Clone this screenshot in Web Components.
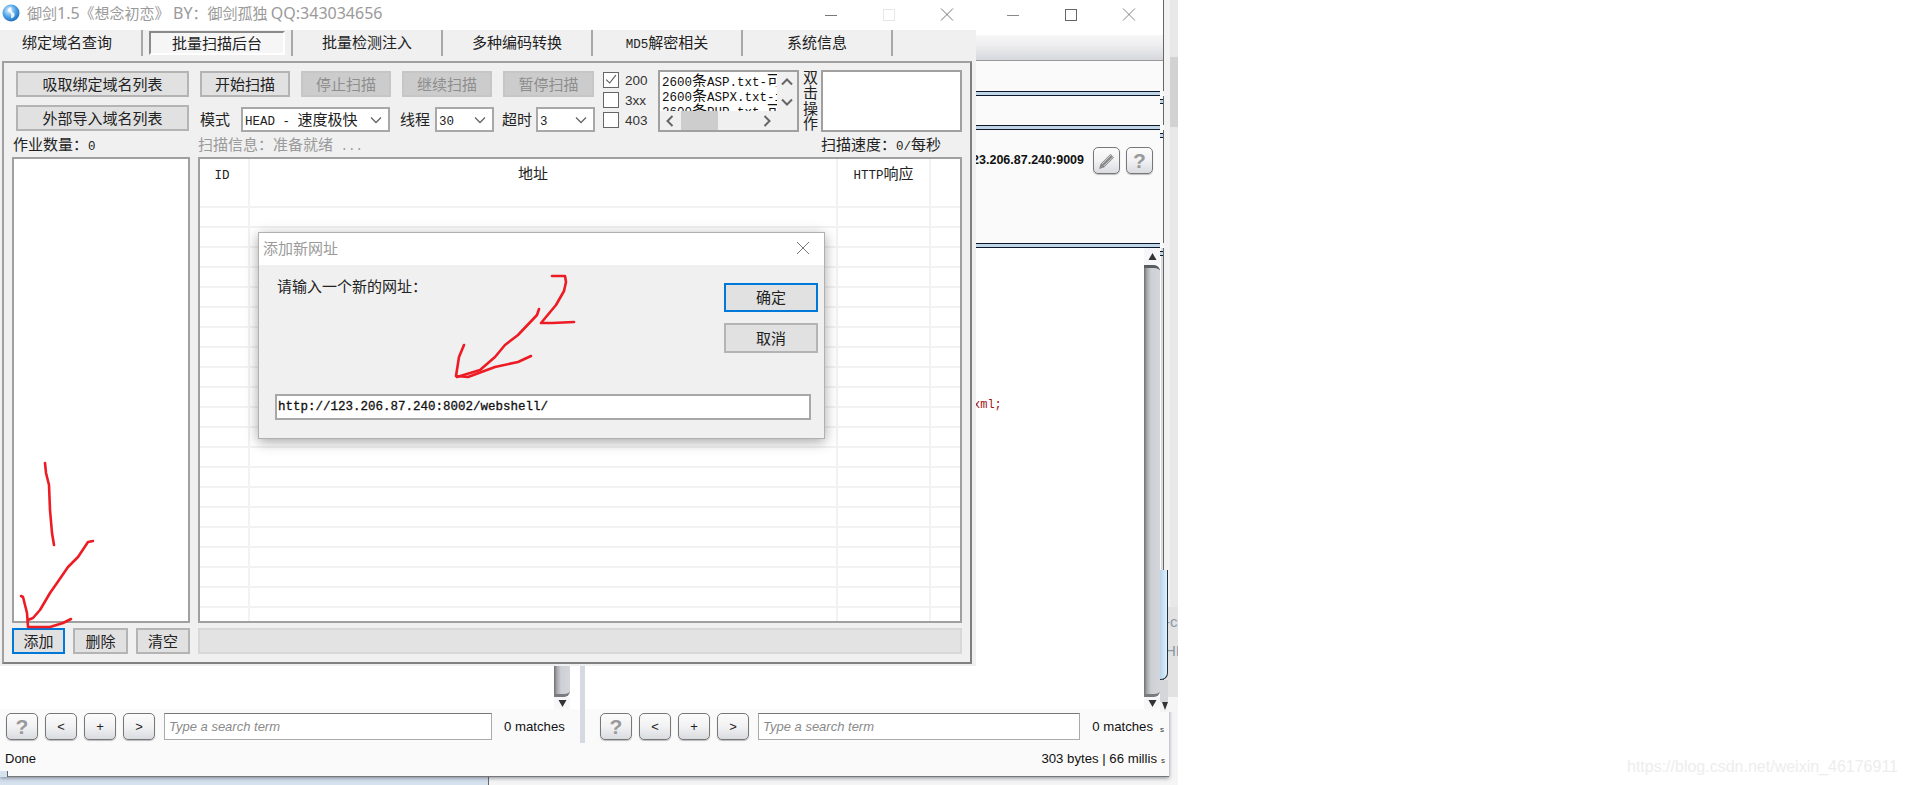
<!DOCTYPE html>
<html lang="zh">
<head>
<meta charset="utf-8">
<title>御剑</title>
<style>
    html, body { margin: 0; height: 785px; background: #fff; overflow: hidden; }
    body { position: relative; font: 15px "Noto Sans CJK SC", "Liberation Sans", sans-serif; color: #222; }
</style>
</head>
<body>
<desk-backdrop></desk-backdrop>
<burp-window></burp-window>
<edge-strip></edge-strip>
<yujian-window></yujian-window>
<add-url-dialog></add-url-dialog>
<ink-marks></ink-marks>
<desk-watermark>https://blog.csdn.net/weixin_46176911</desk-watermark>

<script>
// small helper, every element below is just a shadow root with fixed markup
class ShadowBase extends HTMLElement {
    constructor() {
        super();
        this.attachShadow({ mode: 'open' });
    }
    connectedCallback() {
        this.shadowRoot.innerHTML = this.markup();
    }
}

// the SimSun-looking latin run inside chinese labels
class MonoRun extends ShadowBase {
    markup() {
        return `<style>:host { font-family: "Liberation Mono", monospace; font-size: 12.5px; }</style><slot></slot>`;
    }
}

class WinButton extends ShadowBase {
    markup() {
        return `
            <style>
                :host {
                    display: flex; align-items: center; justify-content: center; box-sizing: border-box;
                    height: 26px; padding-bottom: 2px; border: 2px solid #b4b4b4; background: #e1e1e1; color: #222; white-space: nowrap;
                }
                :host([disabled]) { background: #cccccc; border-color: #c6c6c6; color: #8e8e8e; }
                :host([focused]) { border-color: #0078d7; }
            </style>
            <slot></slot>`;
    }
}

class WindowControls extends ShadowBase {
    markup() {
        const tone = this.getAttribute('tone') || '#777';
        const maxTone = this.getAttribute('max-tone') || tone;
        return `
            <style>
                :host { display: flex; }
                svg { width: 58px; height: 30px; display: block; }
            </style>
            <svg viewBox="0 0 58 30"><path d="M23 15.5h12" stroke="${tone}" fill="none"/></svg>
            <svg viewBox="0 0 58 30"><rect x="23.5" y="9.500" width="11" height="11" stroke="${maxTone}" fill="none"/></svg>
            <svg viewBox="0 0 58 30"><path d="M23 8.500l12 12M35 8.500l-12 12" stroke="${tone}" fill="none"/></svg>`;
    }
}

class WinCombo extends ShadowBase {
    markup() {
        return `
            <style>
                :host {
                    display: flex; align-items: center; justify-content: space-between; box-sizing: border-box;
                    height: 25px; padding: 0 6px 0 2px; border: 2px solid #a8a8a8; background: #fff; white-space: nowrap;
                }
                span { margin-bottom: 2px; }
                svg { width: 12px; height: 8px; }
            </style>
            <span><slot></slot></span>
            <svg viewBox="0 0 12 8"><path d="M1 1.500l5 5 5-5" stroke="#666" stroke-width="1.3" fill="none"/></svg>`;
    }
}

class WinCheck extends ShadowBase {
    markup() {
        const mark = this.hasAttribute('checked')
            ? '<svg viewBox="0 0 16 16"><path d="M2.500 7.500l4 4 7-9" stroke="#555" stroke-width="1.2" fill="none"/></svg>' : '';
        return `
            <style>
                :host { display: flex; align-items: center; gap: 6px; height: 16px; font: 13.5px "Liberation Sans", sans-serif; color: #333; }
                .box { width: 16px; height: 16px; box-sizing: border-box; border: 1px solid #666; background: #fff; flex: none; }
                svg { display: block; width: 14px; height: 14px; }
            </style>
            <div class="box">${mark}</div><slot></slot>`;
    }
}

class DictList extends ShadowBase {
    markup() {
        const lines = [
            '<mono-run>ASP.txt-</mono-run>可用',
            '<mono-run>ASPX.txt-i</mono-run>',
            '<mono-run>PHP.txt-</mono-run>可用'
        ];
        return `
            <style>
                :host { display: grid; grid-template-columns: 117px 1fr; grid-template-rows: 39px 1fr; box-sizing: border-box; border: 2px solid #a0a0a0; background: #f0f0f0; }
                .text { background: #fff; overflow: hidden; padding: 0 0 0 2px; line-height: 15px; color: #111; white-space: nowrap; }
                .line { height: 15px; overflow: hidden; }
                .vbar { display: flex; flex-direction: column; align-items: center; padding-top: 6px; gap: 12px; }
                .hbar { grid-column: 1 / 3; display: flex; align-items: center; padding-left: 6px; }
                .thumb { width: 37px; height: 19px; margin: 0 45px 0 7px; background: #cdcdcd; }
                svg { display: block; }
            </style>
            <div class="text">${lines.map(l => `<div class="line"><mono-run>2600</mono-run>条${l}</div>`).join('')}</div>
            <div class="vbar">
                <svg width="12" height="8" viewBox="0 0 12 8"><path d="M1 6.500l5-5 5 5" stroke="#666" stroke-width="2" fill="none"/></svg>
                <svg width="12" height="8" viewBox="0 0 12 8"><path d="M1 1.500l5 5 5-5" stroke="#666" stroke-width="2" fill="none"/></svg>
            </div>
            <div class="hbar">
                <svg width="8" height="12" viewBox="0 0 8 12"><path d="M6.500 1l-5 5 5 5" stroke="#666" stroke-width="2" fill="none"/></svg>
                <div class="thumb"></div>
                <svg width="8" height="12" viewBox="0 0 8 12"><path d="M1.500 1l5 5-5 5" stroke="#666" stroke-width="2" fill="none"/></svg>
            </div>`;
    }
}

class ScanTable extends ShadowBase {
    markup() {
        let rows = '';
        for (let i = 0; i < 22; i++) {
            rows += '<div class="row"><div></div><div></div><div></div><div></div></div>';
        }
        return `
            <style>
                :host { display: flex; flex-direction: column; box-sizing: border-box; border: 2px solid #a0a0a0; background: #fff; overflow: hidden; }
                .head, .row { display: grid; grid-template-columns: 50px 588px 93px 1fr; flex: none; }
                .head { height: 29px; }
                .head div { display: flex; align-items: center; justify-content: center; padding-bottom: 3px; border-right: 2px solid #f2f2f2; }
                .head div:last-child, .row div:last-child { border-right: 0; }
                .head .id { padding-right: 4px; }
                .head .addr { padding-right: 20px; }
                .row { height: 20px; box-sizing: border-box; border-bottom: 2px solid #f2f2f2; }
                .row div { border-right: 2px solid #f2f2f2; }
            </style>
            <div class="head">
                <div class="id"><span><mono-run>ID</mono-run></span></div>
                <div class="addr">地址</div>
                <div><span><mono-run>HTTP</mono-run>响应</span></div>
                <div></div>
            </div>
            ${rows}`;
    }
}

class YujianWindow extends ShadowBase {
    markup() {
        const tabs = ['绑定域名查询', '批量扫描后台', '批量检测注入', '多种编码转换', '<span><mono-run>MD5</mono-run>解密相关</span>', '系统信息'];
        return `
            <style>
                :host { position: absolute; left: 0; top: 0; width: 976px; height: 666px; background: #f0f0f0; display: flex; flex-direction: column; }
                .title { height: 30px; flex: none; background: #fff; display: flex; align-items: center; padding-left: 2px; color: #9a9a9a; white-space: nowrap; }
                .title svg.globe { width: 18px; height: 18px; margin: 0 7px 5px 0; }
                .title span { flex: 1; padding-bottom: 5px; }
                .title i { font: 16px "Noto Sans", sans-serif; }
                .tabs { height: 31px; flex: none; display: grid; grid-template-columns: repeat(6, 150px); margin-left: -7px; }
                .tab { height: 26px; box-sizing: border-box; padding-bottom: 3px; display: flex; align-items: center; justify-content: center; border-right: 2px solid #a8a8a8; white-space: nowrap; }
                .tab b { font-weight: 400; display: flex; align-items: center; justify-content: center; box-sizing: border-box; width: 136px; height: 24px; margin-bottom: -3px; padding-bottom: 2px; border: 2px solid; border-color: #8a8a8a #fff #fff #8a8a8a; background: #f6f6f6; }
                .panel { flex: none; margin-left: 2px; width: 970px; height: 603px; box-sizing: border-box; border: 2px solid #a0a0a0; border-bottom-color: #808080; border-right-color: #808080; display: flex; flex-direction: column; }
                .top { display: flex; height: 62px; margin-top: 7px; padding-left: 12px; flex: none; }
                .col1 { width: 173px; margin-right: 11px; padding-top: 1px; display: flex; flex-direction: column; gap: 8px; }
                .col2 { width: 395px; margin-right: 8px; padding-top: 1px; display: flex; flex-direction: column; gap: 10px; }
                .r { display: flex; align-items: center; gap: 11px; }
                .r > span { margin-bottom: 2px; }
                .r win-button { width: 90px; }
                .mode { width: 149px; margin-right: -1px; }
                .small { width: 59px; margin-left: -6px; }
                .checks { width: 50px; margin-right: 5px; padding-top: 2px; display: flex; flex-direction: column; gap: 4px; }
                dict-list { width: 141px; height: 62px; margin-right: 4px; }
                .vert { width: 15px; margin-right: 3px; writing-mode: vertical-rl; text-orientation: upright; line-height: 15px; letter-spacing: .3px; }
                .memo { width: 141px; height: 62px; box-sizing: border-box; border: 2px solid #a0a0a0; background: #fff; }
                .labels { height: 25px; flex: none; box-sizing: border-box; padding: 0 0 3px 9px; display: flex; align-items: center; white-space: nowrap; }
                .labels .a { width: 185px; }
                .labels .b { width: 623px; color: #9a9a9a; }
                .main { height: 466px; flex: none; padding-left: 8px; display: grid; grid-template-columns: 178px 764px; gap: 8px; }
                .list { box-sizing: border-box; border: 2px solid #a0a0a0; background: #fff; }
                .foot { height: 26px; flex: none; margin-top: 5px; padding-left: 8px; display: grid; grid-template-columns: 53px 55px 54px 764px; gap: 8px; }
                .bar { background: #e3e3e3; border: 2px solid #d8d8d8; box-sizing: border-box; }
            </style>
            <div class="title">
                <svg class="globe" viewBox="0 0 18 18">
                    <defs><radialGradient id="g" cx=".4" cy=".35" r=".7"><stop offset="0" stop-color="#e8f4ff"/><stop offset=".55" stop-color="#4fa3e6"/><stop offset="1" stop-color="#1767b8"/></radialGradient></defs>
                    <circle cx="9" cy="9" r="8.500" fill="url(#g)"/>
                    <path d="M9 3c-2 .5-3.500 2-3 4 1 1 2.500 1 3 3 .5 1.500-.5 3 .5 4.500 2.500-1 3.500-3 3-5-1-1-2.500-1-3-3-.2-1.300.5-2.500-.5-3.500z" fill="#fff" opacity=".85"/>
                </svg>
                <span>御剑<i>1.5</i>《想念初恋》 <i>BY</i>&#xFF1A;御剑孤独 <i>QQ:343034656</i></span>
                <window-controls tone="#777" max-tone="#e6e6e6"></window-controls>
            </div>
            <div class="tabs">
                ${tabs.map((t, i) => `<div class="tab">${i === 1 ? `<b>${t}</b>` : t}</div>`).join('')}
            </div>
            <div class="panel">
                <div class="top">
                    <div class="col1">
                        <win-button>吸取绑定域名列表</win-button>
                        <win-button>外部导入域名列表</win-button>
                    </div>
                    <div class="col2">
                        <div class="r">
                            <win-button>开始扫描</win-button>
                            <win-button disabled>停止扫描</win-button>
                            <win-button disabled>继续扫描</win-button>
                            <win-button disabled style="width:91px">暂停扫描</win-button>
                        </div>
                        <div class="r">
                            <span>模式</span>
                            <win-combo class="mode"><mono-run>HEAD - </mono-run>速度极快</win-combo>
                            <span>线程</span>
                            <win-combo class="small"><mono-run>30</mono-run></win-combo>
                            <span style="margin-left:-3px">超时</span>
                            <win-combo class="small" style="margin-left:-7px"><mono-run>3</mono-run></win-combo>
                        </div>
                    </div>
                    <div class="checks">
                        <win-check checked>200</win-check>
                        <win-check>3xx</win-check>
                        <win-check>403</win-check>
                    </div>
                    <dict-list></dict-list>
                    <div class="vert">双击操作</div>
                    <div class="memo"></div>
                </div>
                <div class="labels">
                    <div class="a">作业数量&#xFF1A;<mono-run>0</mono-run></div>
                    <div class="b">扫描信息&#xFF1A;准备就绪<mono-run> ...</mono-run></div>
                    <div>扫描速度&#xFF1A;<mono-run>0/</mono-run>每秒</div>
                </div>
                <div class="main">
                    <div class="list"></div>
                    <scan-table></scan-table>
                </div>
                <div class="foot">
                    <win-button focused>添加</win-button>
                    <win-button>删除</win-button>
                    <win-button>清空</win-button>
                    <div class="bar"></div>
                </div>
            </div>`;
    }
}

class AddUrlDialog extends ShadowBase {
    markup() {
        return `
            <style>
                :host { position: absolute; left: 258px; top: 232px; width: 567px; height: 207px; box-sizing: border-box; border: 1px solid #b0b0b0; background: #f0f0f0; box-shadow: 0 3px 12px rgba(0,0,0,.35); display: flex; flex-direction: column; }
                .title { height: 32px; flex: none; box-sizing: border-box; background: #fff; display: flex; align-items: center; justify-content: space-between; padding: 0 14px 0 4px; color: #9a9a9a; }
                .title span { padding-bottom: 4px; }
                .title svg { width: 14px; height: 14px; margin-bottom: 2px; }
                .body { height: 129px; flex: none; box-sizing: border-box; padding: 18px 6px 0 18px; display: flex; justify-content: space-between; }
                .ask { margin-top: -8px; }
                .btns { width: 94px; display: flex; flex-direction: column; gap: 11px; }
                .btns win-button:first-child { height: 29px; }
                .btns win-button:last-child { height: 30px; }
                .url { margin: 0 13px 0 16px; height: 26px; box-sizing: border-box; border: 2px solid #a8a8a8; background: #fff; display: flex; align-items: center; padding-left: 1px; color: #111; -webkit-text-stroke: .3px #111; }
            </style>
            <div class="title">
                <span>添加新网址</span>
                <svg viewBox="0 0 14 14"><path d="M1 1l12 12M13 1L1 13" stroke="#777" fill="none"/></svg>
            </div>
            <div class="body">
                <div class="ask">请输入一个新的网址&#xFF1A;</div>
                <div class="btns">
                    <win-button focused>确定</win-button>
                    <win-button>取消</win-button>
                </div>
            </div>
            <div class="url"><mono-run>http://123.206.87.240:8002/webshell/</mono-run></div>`;
    }
}

class GlossButton extends ShadowBase {
    markup() {
        return `
            <style>
                :host {
                    display: flex; align-items: center; justify-content: center; box-sizing: border-box; flex: none;
                    width: 32px; height: 27px; border: 1px solid #777; border-radius: 5px;
                    background: linear-gradient(#fbfbfb, #f2f2f4 50%, #d9dbe0);
                    box-shadow: 0 1px 1px rgba(0,0,0,.25);
                    font: 13px "Liberation Sans", sans-serif; color: #222;
                }
                :host([help]) { font-size: 21px; font-weight: 700; color: #9a9a9a; }
            </style>
            <slot></slot>`;
    }
}

class SearchBar extends ShadowBase {
    markup() {
        return `
            <style>
                :host { display: flex; align-items: flex-start; height: 34px; box-sizing: border-box; padding-top: 4px; gap: 7px; background: #fafafa; font: 13.2px "Liberation Sans", sans-serif; color: #111; white-space: nowrap; }
                .term { width: var(--term-width, 328px); height: 27px; box-sizing: border-box; margin: 0 5px 0 2px; border: 1px solid #aaa; border-top-color: #777; background: #fff; display: flex; align-items: center; padding-left: 4px; font-size: 13px; font-style: italic; color: #8a8a8a; }
                .count { line-height: 27px; }
                ::slotted(span) { font-size: 8px; line-height: 33px; color: #333; }
            </style>
            <gloss-button help>?</gloss-button>
            <gloss-button>&lt;</gloss-button>
            <gloss-button>+</gloss-button>
            <gloss-button>&gt;</gloss-button>
            <div class="term">Type a search term</div>
            <div class="count">0 matches</div>
            <slot></slot>`;
    }
}

class GlassScroll extends ShadowBase {
    markup() {
        return `
            <style>
                :host { display: flex; flex-direction: column; width: 16px; flex: none; }
                .cap { flex: none; background: #f7f7f9; display: flex; align-items: center; justify-content: center; }
                .up { height: 17px; }
                .down { height: 12px; }
                .thumb { flex: 1; background: linear-gradient(90deg, #6f6f6f, #a8a9ad 3px, #cdd0d5 7px, #d4d6db); border-top: 3px solid #5c5d61; border-bottom: 3px solid #7a7b7f; border-radius: 0 6px 6px 0; }
                svg { width: 9px; height: 9px; display: block; }
            </style>
            <div class="cap up"><svg viewBox="0 0 9 9"><path d="M4.500 1L8.500 8H.5z" fill="#333"/></svg></div>
            <div class="thumb"></div>
            <div class="cap down"><svg viewBox="0 0 9 9"><path d="M4.500 8L.5 1h8z" fill="#333"/></svg></div>`;
    }
}

class BurpWindow extends ShadowBase {
    markup() {
        return `
            <style>
                :host { position: absolute; left: 0; top: 0; width: 1169px; height: 777px; box-sizing: border-box; background: #fafafa; border-bottom: 1px solid #777; box-shadow: 0 1px 4px rgba(40,50,70,.55); display: flex; flex-direction: column; font: 13px "Liberation Sans", sans-serif; color: #111; }
                .title { width: 1164px; height: 30px; flex: none; box-sizing: border-box; padding-right: 5px; background: #fff; display: flex; justify-content: flex-end; border-right: 1px solid #666; }
                .tool { width: 1164px; height: 31px; flex: none; box-sizing: border-box; padding-top: 5px; background: #fff; border-right: 1px solid #666; }
                .tool div { height: 26px; box-sizing: border-box; background: linear-gradient(#f7f7f8, #eeeef0 40%, #d6d8dd); border-bottom: 1px solid #999; }
                .band { width: 1164px; flex: none; box-sizing: border-box; background: #fafafa; border-right: 1px solid #666; }
                .rule { position: relative; width: 1160px; height: 5px; flex: none; box-sizing: border-box; background: #c2d5e6; border-top: 1px solid #0c1a2c; border-bottom: 1px solid #0c1a2c; }
                .rule::after { content: ""; position: absolute; left: 1160px; top: 7px; width: 3px; height: 3px; background: #c2d5e6; border-top: 1px solid #0c1a2c; border-bottom: 1px solid #0c1a2c; }
                .target { display: flex; justify-content: flex-end; align-items: flex-start; gap: 6px; padding: 17px 10px 0 0; }
                .addr { font-weight: 700; font-size: 12.500px; line-height: 27px; margin-right: 3px; }
                .target gloss-button { width: 27px; }
                .panes { width: 1164px; flex: 1; min-height: 0; display: grid; grid-template-columns: 580px 5px 579px; }
                .pane { display: flex; flex-direction: column; min-width: 0; background: #fafafa; }
                .div { background: #d5d9e1; }
                .edit { flex: 1; min-height: 0; display: flex; background: #fff; }
                .page { flex: 1; font: 12px "Liberation Mono", monospace; color: #a31515; padding: 150px 0 0 378px; white-space: nowrap; }
                .gutter { width: 4px; flex: none; box-sizing: border-box; background: #d9dbdf; border-right: 1px solid #666; border-left: 1px solid #fff; }
                .status { height: 33px; flex: none; box-sizing: border-box; display: flex; align-items: center; padding: 0 4px 3px 5px; background: #fafafa; }
                .status .grow { flex: 1; }
                .status .tail { font-size: 8px; margin: 5px 0 0 4px; color: #333; }
                .status .size { font-size: 13.2px; }
                .notch { position: absolute; left: 0; bottom: -1px; width: 8px; height: 6px; background: #d7e2ef; border-right: 1px solid #666; box-sizing: border-box; }
            </style>
            <div class="title"><window-controls tone="#888" max-tone="#666"></window-controls></div>
            <div class="tool"><div></div></div>
            <div class="band" style="height:30px"></div>
            <div class="rule"></div>
            <div class="band" style="height:29px"></div>
            <div class="rule"></div>
            <div class="band target" style="height:113px">
                <div class="addr">23.206.87.240:9009</div>
                <gloss-button>
                    <svg width="20" height="20" viewBox="0 0 20 20"><path d="M2 18l1.500-5L13.500 3l3.500 3.500L7 16.500z" fill="#8c8c8c"/><path d="M5 13L14.500 3.500M7 15L16 6" stroke="#d8d8d8" stroke-width=".8"/></svg>
                </gloss-button>
                <gloss-button help>?</gloss-button>
            </div>
            <div class="rule"></div>
            <div class="panes">
                <div class="pane" style="--term-width:328px">
                    <div class="edit"><div style="flex:1"></div><glass-scroll></glass-scroll><div style="width:10px"></div></div>
                    <search-bar style="padding-left:6px"></search-bar>
                </div>
                <div class="div"></div>
                <div class="pane" style="--term-width:325px">
                    <div class="edit" style="padding-left:10px">
                        <div class="page">xml;</div>
                        <glass-scroll></glass-scroll>
                        <div class="gutter"></div>
                    </div>
                    <search-bar style="padding-left:15px"><span>s</span></search-bar>
                </div>
            </div>
            <div class="status"><div>Done</div><div class="grow"></div><div class="size">303 bytes | 66 millis</div><div class="tail">s</div></div>
            <div class="notch"></div>`;
    }
}

// what shows of the windows stacked behind, down the right hand side
class EdgeStrip extends ShadowBase {
    markup() {
        return `
            <style>
                :host { position: absolute; left: 1160px; top: 0; width: 18px; height: 712px; display: grid; grid-template-columns: 4px 6px 8px; grid-template-rows: 570px 37px 90px 15px; font: 15px "Liberation Sans", sans-serif; color: #8a98a8; }
                .a { grid-column: 2; grid-row: 1 / 3; background: #f2f2f2; }
                .b { grid-column: 3; grid-row: 1 / 3; background: linear-gradient(#e8e8e8 57px, #d2d2d2 57px, #d2d2d2 127px, #e8e8e8 127px); }
                .c { grid-column: 2 / 4; grid-row: 3; background: #e2e2e2; overflow: hidden; padding: 0 0 0 1px; line-height: 29px; }
                .d { grid-column: 2 / 4; grid-row: 4; background: #f5f5f5; }
                .blue { grid-column: 1 / 3; grid-row: 1 / 5; align-self: end; height: 142px; width: 8px; display: flex; flex-direction: column; }
                .glass { flex: 1; box-sizing: border-box; background: linear-gradient(90deg, #b4d5ed, #e2f0fa); border-right: 1px solid #22303f; border-bottom: 1px solid #22303f; border-radius: 0 0 7px 0; }
                .end { height: 32px; flex: none; background: linear-gradient(#d4d6da 70%, #f4f4f4 70%); display: flex; align-items: flex-end; padding: 0 0 2px 2px; box-sizing: border-box; }
                svg { width: 6px; height: 8px; display: block; }
            </style>
            <div class="a"></div><div class="b"></div>
            <div class="c">-c<br>HI</div><div class="d"></div>
            <div class="blue">
                <div class="glass"></div>
                <div class="end"><svg viewBox="0 0 6 8"><path d="M0 0h6L3 8z" fill="#333"/></svg></div>
            </div>`;
    }
}

class DeskBackdrop extends ShadowBase {
    markup() {
        return `
            <style>
                :host { position: absolute; inset: 0; display: block; }
                .blue { position: absolute; left: 0; top: 760px; width: 489px; height: 25px; box-sizing: border-box; background: #d7e2ef; border-right: 1px solid #666; }
                .grey { position: absolute; left: 489px; top: 700px; width: 689px; height: 85px; background: #f5f5f5; }
            </style>
            <div class="blue"></div><div class="grey"></div>`;
    }
}

class InkMarks extends ShadowBase {
    markup() {
        const strokes = [
            'M552 276L565 276L566 282L564 291L556 305L541 323L552 323L574 322',
            'M539 309L537 315L518 335L505 345L495 357L480 370L457 377',
            'M464 345L459 357L456 376L468 377L495 367L518 362L531 356',
            'M45 463L46 473L49 485L50 510L52 533L54 545',
            'M93 541L88 542L78 557L68 567L57 583L50 593L40 610L33 618L28 620',
            'M21 596L23 597L27 613L28 627L50 627L63 623L71 619'
        ];
        return `
            <style>
                :host { position: absolute; inset: 0; display: block; pointer-events: none; }
                svg { width: 100%; height: 100%; display: block; }
                path { fill: none; stroke: #ed1c24; stroke-width: 2.6; stroke-linecap: round; stroke-linejoin: round; }
            </style>
            <svg viewBox="0 0 1906 785">${strokes.map(d => `<path d="${d}"/>`).join('')}</svg>`;
    }
}

class DeskWatermark extends ShadowBase {
    markup() {
        return `
            <style>
                :host { position: absolute; right: 8px; top: 758px; font: 16px "Liberation Sans", sans-serif; color: #ededed; white-space: nowrap; }
            </style>
            <slot></slot>`;
    }
}

customElements.define('mono-run', MonoRun);
customElements.define('win-button', WinButton);
customElements.define('window-controls', WindowControls);
customElements.define('win-combo', WinCombo);
customElements.define('win-check', WinCheck);
customElements.define('dict-list', DictList);
customElements.define('scan-table', ScanTable);
customElements.define('gloss-button', GlossButton);
customElements.define('search-bar', SearchBar);
customElements.define('glass-scroll', GlassScroll);
customElements.define('burp-window', BurpWindow);
customElements.define('edge-strip', EdgeStrip);
customElements.define('desk-backdrop', DeskBackdrop);
customElements.define('yujian-window', YujianWindow);
customElements.define('add-url-dialog', AddUrlDialog);
customElements.define('ink-marks', InkMarks);
customElements.define('desk-watermark', DeskWatermark);
</script>
</body>
</html>
